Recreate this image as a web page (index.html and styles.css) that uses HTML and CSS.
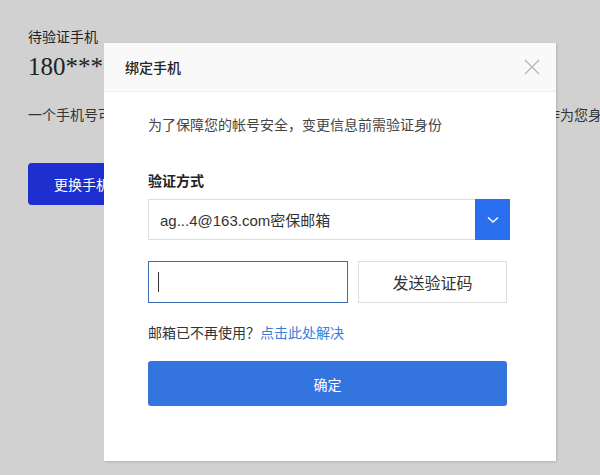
FILE: index.html
```html
<!DOCTYPE html>
<html lang="zh-CN">
<head>
  <meta charset="UTF-8">
  <meta name="viewport" content="width=device-width, initial-scale=1.0">
  <title>绑定手机</title>
  <link rel="stylesheet" href="styles.css">
</head>
<body>
  <div class="page">
    <div class="label">待验证手机</div>
    <div class="phone">180****1234</div>
    <p class="note">一个手机号可以绑定一个帐号，若您的手机号已变更或丢失，请及时更换，绑定后可作为您身份验证的凭证</p>
    <button class="change-btn">更换手机</button>
  </div>

  <div class="modal">
    <div class="modal-header">
      <span class="modal-title">绑定手机</span>
      <span class="close">
        <svg width="16" height="16" viewBox="0 0 16 16"><path d="M1 1L15 15M15 1L1 15" stroke="#b5b5b5" stroke-width="1.3" fill="none"/></svg>
      </span>
    </div>
    <div class="modal-body">
      <p class="tip">为了保障您的帐号安全，变更信息前需验证身份</p>
      <div class="field-label">验证方式</div>
      <div class="select">
        <span class="select-text">ag...4@163.com密保邮箱</span>
        <span class="select-arrow">
          <svg width="12" height="8" viewBox="0 0 12 8"><path d="M1 1.5L6 6L11 1.5" stroke="#fff" stroke-width="1.5" fill="none"/></svg>
        </span>
      </div>
      <div class="code-row">
        <div class="code-input"><span class="caret"></span></div>
        <button class="send-btn">发送验证码</button>
      </div>
      <div class="help">邮箱已不再使用？<a href="#">点击此处解决</a></div>
      <button class="ok-btn">确定</button>
    </div>
  </div>
</body>
</html>
```

FILE: styles.css
```css
body {
  margin: 0;
  background-color: #d1d1d1;
  font-family: "Noto Sans CJK SC", sans-serif;
  color: #222;
  width: 600px;
  height: 475px;
  overflow: hidden;
  position: relative;
}

.page {
  padding: 26px 28px;
}

.label {
  font-size: 14px;
  line-height: 20px;
}

.phone {
  font-family: "Liberation Serif", serif;
  font-size: 25px;
  line-height: 30px;
  margin-top: 6px;
}

.note {
  font-size: 14px;
  margin: 22px 0 0;
  line-height: 20px;
  white-space: nowrap;
  color: #333;
}

.change-btn {
  margin-top: 39px;
  width: 110px;
  height: 42px;
  background-color: #1f2fcf;
  color: #fff;
  border: none;
  border-radius: 4px;
  font-family: inherit;
  font-size: 14px;
  text-align: left;
  padding-left: 26px;
}

.modal {
  position: absolute;
  left: 104px;
  top: 43px;
  width: 452px;
  height: 418px;
  background-color: #fff;
  box-shadow: 1px 1px 2px rgba(0, 0, 0, 0.15);
}

.modal-header {
  height: 48px;
  background-color: #f9f9f9;
  border-bottom: 1px solid #efefef;
  display: flex;
  align-items: center;
  justify-content: space-between;
  padding: 0 16px 0 21px;
}

.modal-title {
  font-size: 14px;
  font-weight: 500;
  color: #222;
}

.close {
  display: flex;
}

.modal-body {
  padding: 22px 48px 0 44px;
}

.tip {
  margin: 0;
  font-size: 14px;
  line-height: 20px;
  color: #444;
}

.field-label {
  margin-top: 36px;
  font-size: 14px;
  font-weight: bold;
  line-height: 20px;
}

.select {
  margin-top: 9px;
  height: 41px;
  width: 362px;
  box-sizing: border-box;
  border: 1px solid #ddd;
  display: flex;
  align-items: center;
}

.select-text {
  flex: 1;
  padding-left: 11px;
  font-family: "Liberation Sans", "Noto Sans CJK SC", sans-serif;
  font-size: 15px;
  color: #333;
}

.select-arrow {
  width: 35px;
  height: 41px;
  margin-right: -1px;
  background-color: #2a6ff0;
  display: flex;
  align-items: center;
  justify-content: center;
}

.code-row {
  display: flex;
  gap: 10px;
  margin-top: 21px;
  width: 359px;
}

.code-input {
  width: 200px;
  height: 42px;
  box-sizing: border-box;
  border: 1px solid #3d6db5;
  display: flex;
  align-items: center;
  padding-left: 9px;
}

.caret {
  width: 1px;
  height: 20px;
  background-color: #333;
}

.send-btn {
  flex: 1;
  height: 42px;
  background-color: #fff;
  border: 1px solid #ddd;
  font-family: inherit;
  font-size: 16px;
  color: #333;
}

.help {
  margin-top: 19px;
  font-size: 14px;
  line-height: 20px;
  color: #333;
}

.help a {
  color: #3b7ddb;
  text-decoration: none;
}

.ok-btn {
  display: block;
  margin-top: 19px;
  width: 359px;
  height: 45px;
  background-color: #3474df;
  color: #fff;
  border: none;
  border-radius: 3px;
  font-family: inherit;
  font-size: 14px;
}
```
